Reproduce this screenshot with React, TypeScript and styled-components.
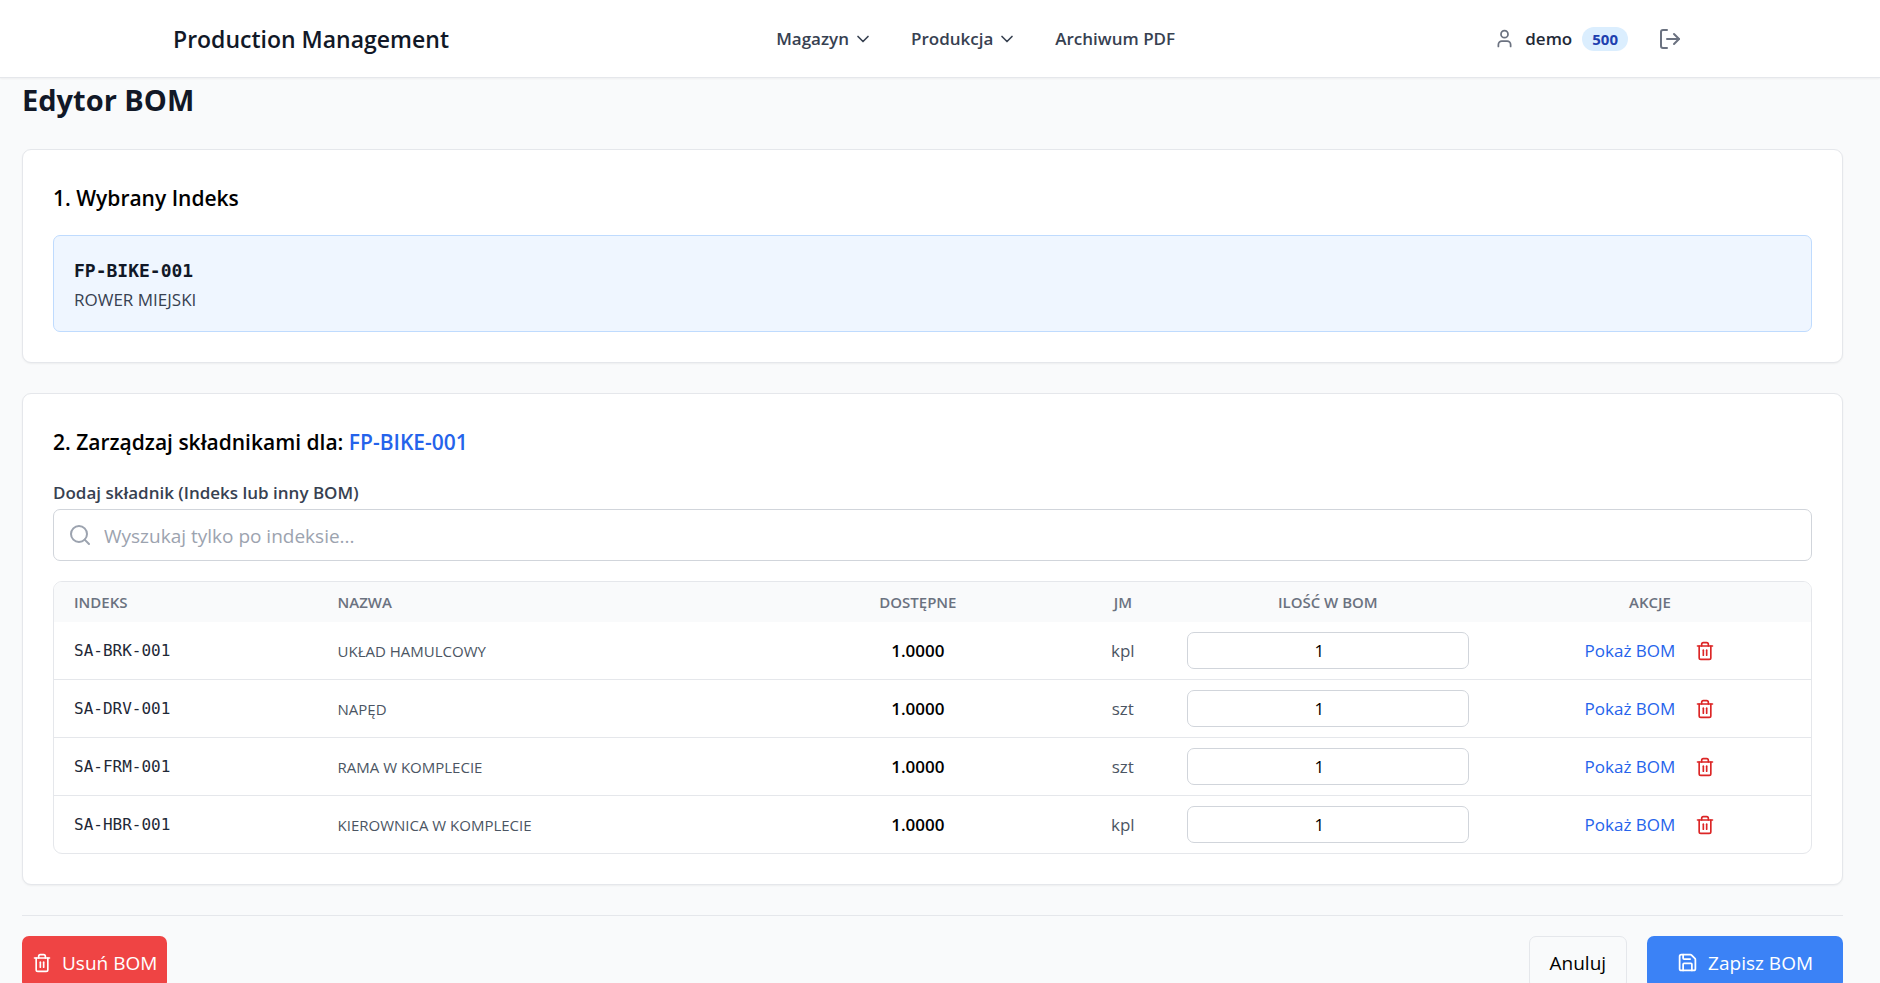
import React from "react";
import styled, { createGlobalStyle } from "styled-components";
import { ChevronDown, LogOut, Save, Search, Trash2, User } from "lucide-react";

const sans = '"Open Sans", "Noto Sans", sans-serif';
const mono = '"DejaVu Sans Mono", "Liberation Mono", monospace';

const GlobalStyle = createGlobalStyle`
  *, *::before, *::after { box-sizing: border-box; }
  body {
    margin: 0;
    background: #f9fafb;
    color: #000;
    font-family: ${sans};
    font-size: 17px;
    line-height: 24px;
    overflow: hidden;
  }
  h1, h2, p { margin: 0; }
  button, input { font: inherit; }
  svg { display: block; flex: none; }
`;

const Header = styled.header`
  background: #fff;
  border-bottom: 1px solid #e5e7eb;
  box-shadow: 0 1px 2px rgba(0, 0, 0, 0.05);
  padding: 0 188px 0 173px;
`;

const HeaderInner = styled.div`
  display: flex;
  align-items: center;
  justify-content: space-between;
  height: 77px;
`;

const Brand = styled.a`
  padding-right: 8px;
  color: #111827;
  font-size: 23px;
  font-weight: 600;
  line-height: 32px;
  text-decoration: none;
`;

const Nav = styled.nav`
  display: flex;
  align-items: center;
  gap: 38px;
`;

const NavButton = styled.button`
  display: flex;
  align-items: center;
  gap: 4px;
  padding: 0;
  border: 0;
  background: none;
  color: #374151;
  font-weight: 600;
`;

const NavLink = styled.a`
  color: #374151;
  font-weight: 600;
  text-decoration: none;
`;

const UserArea = styled.div`
  display: flex;
  align-items: center;
  gap: 10px;
  color: #6b7280;
`;

const UserName = styled.span`
  color: #1f2937;
  font-weight: 600;
`;

const Badge = styled.span`
  padding: 0 10px;
  border-radius: 12px;
  background: #dbeefe;
  color: #1e40af;
  font-size: 15px;
  font-weight: 700;
`;

const LogoutButton = styled.button`
  margin-left: 10px;
  padding: 10px;
  border: 0;
  background: none;
  color: #6b7280;
`;

const Main = styled.main`
  padding: 3px 37px 0 22px;
`;

const PageTitle = styled.h1`
  color: #111827;
  font-size: 29px;
  font-weight: 700;
  line-height: 38px;
`;

const Card = styled.section`
  margin-top: 30px;
  padding: 30px;
  border: 1px solid #e5e7eb;
  border-radius: 9px;
  background: #fff;
  box-shadow: 0 1px 2px rgba(0, 0, 0, 0.05);
`;

const CardTitle = styled.h2`
  margin-bottom: 19px;
  font-size: 21px;
  font-weight: 600;
  line-height: 36px;
`;

const Accent = styled.span`
  color: #2563eb;
`;

const Selected = styled.div`
  padding: 20px 20px 18px;
  border: 1px solid #bfdbfe;
  border-radius: 7px;
  background: #eff6ff;
`;

const SelectedCode = styled.p`
  margin-bottom: 2px;
  color: #111827;
  font-family: ${mono};
  font-size: 18px;
  font-weight: 700;
  line-height: 29px;
`;

const SelectedName = styled.p`
  color: #374151;
  line-height: 26px;
`;

const Label = styled.label`
  display: block;
  margin-bottom: 3px;
  color: #374151;
  font-weight: 600;
  line-height: 27px;
`;

const SearchBox = styled.div`
  display: flex;
  align-items: center;
  gap: 12px;
  height: 52px;
  margin-bottom: 20px;
  padding: 0 14px;
  border: 1px solid #d1d5db;
  border-radius: 7px;
  color: #9ca3af;
`;

const SearchInput = styled.input`
  flex: 1;
  min-width: 0;
  padding: 2px 0 0;
  border: 0;
  outline: 0;
  background: none;
  color: #111827;
  font-size: 19px;
  &::placeholder { color: #9ca3af; opacity: 1; }
`;

const TableFrame = styled.div`
  overflow: hidden;
  border: 1px solid #e5e7eb;
  border-radius: 9px;
`;

const Table = styled.table`
  width: 100%;
  table-layout: fixed;
  border-collapse: separate;
  border-spacing: 0;
  tbody tr:not(:last-child) td { border-bottom: 1px solid #e5e7eb; }
`;

const HeadCell = styled.th<{ $left?: boolean; $width?: string }>`
  width: ${(p) => p.$width ?? "auto"};
  height: 40px;
  padding: 0 20px;
  background: #f9fafb;
  color: #6b7280;
  font-size: 15px;
  font-weight: 600;
  text-align: ${(p) => (p.$left ? "left" : "center")};
`;

const Cell = styled.td`
  padding: 10px 20px;
  color: #4b5563;
  text-align: center;
`;

const CodeCell = styled(Cell)`
  color: #1f2937;
  font-family: ${mono};
  font-size: 16px;
  text-align: left;
`;

const NameCell = styled(Cell)`
  font-size: 15px;
  text-align: left;
`;

const StockCell = styled(Cell)`
  color: #000;
  font-weight: 600;
`;

const QtyInput = styled.input`
  display: block;
  width: 100%;
  height: 37px;
  padding: 0 12px 0 10px;
  border: 1px solid #d1d5db;
  border-radius: 7px;
  background: #fff;
  color: #000;
  text-align: center;
`;

const Actions = styled.div`
  display: flex;
  align-items: center;
  justify-content: center;
  gap: 20px;
`;

const ShowButton = styled.button`
  padding: 0;
  border: 0;
  background: none;
  color: #2563eb;
`;

const RemoveButton = styled.button`
  padding: 0;
  border: 0;
  background: none;
  color: #dc2626;
`;

const Footer = styled.footer`
  display: flex;
  align-items: flex-start;
  gap: 20px;
  margin-top: 30px;
  padding: 20px 0;
  border-top: 1px solid #e5e7eb;
`;

const ActionButton = styled.button<{ $kind: "danger" | "plain" | "primary" }>`
  display: flex;
  align-items: center;
  gap: 10px;
  height: 53px;
  padding: ${(p) => ({ danger: "0 10px", plain: "0 20px", primary: "0 30px" })[p.$kind]};
  border: ${(p) => (p.$kind === "plain" ? "1px solid #e5e7eb" : "0")};
  border-radius: 7px;
  background: ${(p) => ({ danger: "#ef4444", plain: "transparent", primary: "#3b82f6" })[p.$kind]};
  color: ${(p) => (p.$kind === "plain" ? "#000" : "#fff")};
  font-size: 19px;
  margin-right: ${(p) => (p.$kind === "danger" ? "auto" : "0")};
`;

const components = [
  { code: "SA-BRK-001", name: "UKŁAD HAMULCOWY", stock: "1.0000", unit: "kpl", qty: 1 },
  { code: "SA-DRV-001", name: "NAPĘD", stock: "1.0000", unit: "szt", qty: 1 },
  { code: "SA-FRM-001", name: "RAMA W KOMPLECIE", stock: "1.0000", unit: "szt", qty: 1 },
  { code: "SA-HBR-001", name: "KIEROWNICA W KOMPLECIE", stock: "1.0000", unit: "kpl", qty: 1 },
];

export default function App() {
  return (
    <>
      <GlobalStyle />
      <Header>
        <HeaderInner>
          <Brand href="#">Production Management</Brand>
          <Nav>
            <NavButton type="button">Magazyn <ChevronDown size={20} /></NavButton>
            <NavButton type="button">Produkcja <ChevronDown size={20} /></NavButton>
            <NavLink href="#archiwum">Archiwum PDF</NavLink>
          </Nav>
          <UserArea>
            <User size={21} />
            <UserName>demo</UserName>
            <Badge>500</Badge>
            <LogoutButton type="button" aria-label="Wyloguj"><LogOut size={24} /></LogoutButton>
          </UserArea>
        </HeaderInner>
      </Header>
      <Main>
        <PageTitle>Edytor BOM</PageTitle>
        <Card>
          <CardTitle>1. Wybrany Indeks</CardTitle>
          <Selected>
            <SelectedCode>FP-BIKE-001</SelectedCode>
            <SelectedName>ROWER MIEJSKI</SelectedName>
          </Selected>
        </Card>
        <Card>
          <CardTitle>2. Zarządzaj składnikami dla: <Accent>FP-BIKE-001</Accent></CardTitle>
          <Label htmlFor="search">Dodaj składnik (Indeks lub inny BOM)</Label>
          <SearchBox>
            <Search size={24} />
            <SearchInput id="search" type="text" placeholder="Wyszukaj tylko po indeksie..." />
          </SearchBox>
          <TableFrame>
            <Table>
              <thead>
                <tr>
                  <HeadCell $left $width="15%">INDEKS</HeadCell>
                  <HeadCell $left $width="25%">NAZWA</HeadCell>
                  <HeadCell>DOSTĘPNE</HeadCell>
                  <HeadCell $width="5%">JM</HeadCell>
                  <HeadCell>ILOŚĆ W BOM</HeadCell>
                  <HeadCell>AKCJE</HeadCell>
                </tr>
              </thead>
              <tbody>
                {components.map((c) => (
                  <tr key={c.code}>
                    <CodeCell>{c.code}</CodeCell>
                    <NameCell>{c.name}</NameCell>
                    <StockCell>{c.stock}</StockCell>
                    <Cell>{c.unit}</Cell>
                    <Cell>
                      <QtyInput type="number" defaultValue={c.qty} aria-label={`Ilość ${c.code}`} />
                    </Cell>
                    <Cell>
                      <Actions>
                        <ShowButton type="button">Pokaż BOM</ShowButton>
                        <RemoveButton type="button" aria-label={`Usuń ${c.code}`}><Trash2 size={20} /></RemoveButton>
                      </Actions>
                    </Cell>
                  </tr>
                ))}
              </tbody>
            </Table>
          </TableFrame>
        </Card>
        <Footer>
          <ActionButton type="button" $kind="danger"><Trash2 size={20} />Usuń BOM</ActionButton>
          <ActionButton type="button" $kind="plain">Anuluj</ActionButton>
          <ActionButton type="button" $kind="primary"><Save size={21} />Zapisz BOM</ActionButton>
        </Footer>
      </Main>
    </>
  );
}
